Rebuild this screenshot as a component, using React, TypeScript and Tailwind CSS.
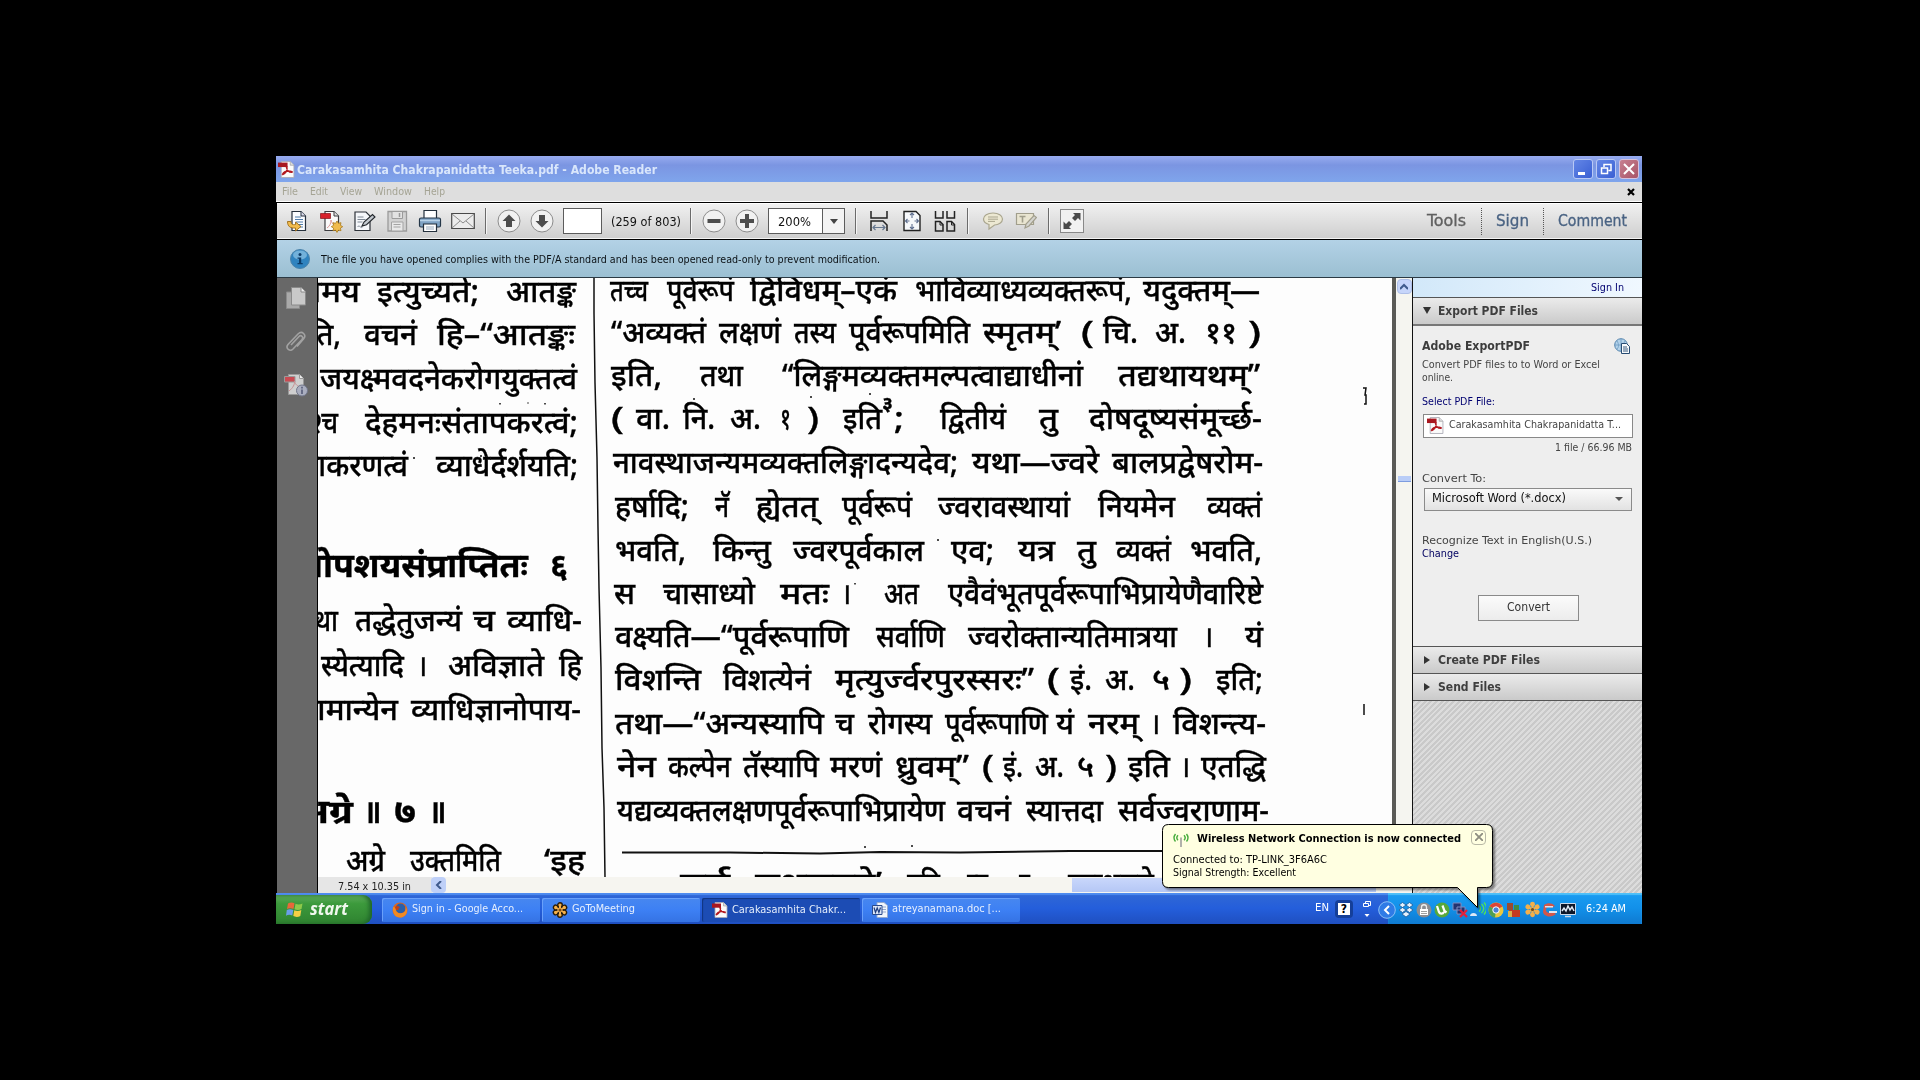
import React, { useLayoutEffect, useRef, useState } from 'react';

interface FitProps {
  w: number;
  className?: string;
  children: string;
}

// Single-line text stretched or squeezed to an exact width
const Fit: React.FC<FitProps> = ({ w, className = '', children }) => {
  const ref = useRef<HTMLSpanElement>(null);
  const [scale, setScale] = useState(1);

  useLayoutEffect(() => {
    if (ref.current && ref.current.offsetWidth > 0) {
      setScale(w / ref.current.getBoundingClientRect().width);
    }
  }, []);

  return (
    <span className="block shrink-0" style={{ width: w }}>
      <span
        ref={ref}
        className={`inline-block origin-left whitespace-pre ${className}`}
        style={{ transform: `scaleX(${scale})` }}
      >
        {children}
      </span>
    </span>
  );
};

// [text, start, end] relative to the column's left edge, raised for note marks
type Word = [string, number, number, boolean?];

interface ScanLine {
  base: number;
  bold?: boolean;
  words: Word[];
}

const leftColumn: ScanLine[] = [
  { base: 303, words: [['शामय', -28, 42], ['इत्युच्यते;', 59, 161], ['आतङ्क', 188, 258]] },
  { base: 346, words: [['ति,', -9, 23], ['वचनं', 46, 99], ['हि–“आतङ्कः', 119, 257]] },
  { base: 390, words: [['जयक्ष्मवदनेकरोगयुक्तत्वं', 2, 259]] },
  { base: 434, words: [['श्च', -8, 20], ['देहमनःसंतापकरत्वं;', 47, 260]] },
  { base: 477, words: [['राकरणत्वं', -12, 90], ['व्याधेर्दर्शयति;', 118, 260]] },
  { base: 577, bold: true, words: [['नोपशयसंप्राप्तितः', -16, 210], ['६', 232, 250]] },
  { base: 632, words: [['था', -4, 20], ['तद्धेतुजन्यं', 37, 144], ['च', 155, 177], ['व्याधि-', 189, 264]] },
  { base: 677, words: [['स्येत्यादि', 3, 86], ['।', 99, 109], ['अविज्ञाते', 130, 226], ['हि', 241, 264]] },
  { base: 721, words: [['सामान्येन', -22, 80], ['व्याधिज्ञानोपाय-', 93, 263]] },
  { base: 823, bold: true, words: [['अग्रे', -22, 35], ['॥', 46, 63], ['७', 76, 98], ['॥', 111, 128]] },
  { base: 872, words: [['अग्रे', 28, 67], ['उक्तमिति', 92, 183], ['‘इह', 226, 267]] },
];

const rightColumn: ScanLine[] = [
  { base: 302, words: [['तच्च', 20, 58], ['पूर्वरूपं', 77, 144], ['द्विविधम्–एकं', 160, 307], ['भाविव्याध्यव्यक्तरूपं,', 325, 542], ['यदुक्तम्—', 553, 670]] },
  { base: 344, words: [['“अव्यक्तं', 21, 116], ['लक्षणं', 129, 191], ['तस्य', 204, 246], ['पूर्वरूपमिति', 259, 380], ['स्मृतम्’', 393, 471], ['(', 491, 504], ['चि.', 513, 548], ['अ.', 565, 596], ['११', 615, 647], [')', 658, 671]] },
  { base: 387, words: [['इति,', 21, 72], ['तथा', 110, 153], ['“लिङ्गमव्यक्तमल्पत्वाद्याधीनां', 192, 493], ['तद्यथायथम्”', 528, 670]] },
  { base: 430, words: [['(', 21, 34], ['वा.', 46, 80], ['नि.', 93, 125], ['अ.', 140, 171], ['१', 190, 201], [')', 217, 229], ['इति', 253, 292], ['३', 292, 303, true], [';', 304, 314], ['द्वितीयं', 350, 416], ['तु', 449, 468], ['दोषदूष्यसंमूर्च्छ-', 499, 672]] },
  { base: 474, words: [['नावस्थाजन्यमव्यक्तलिङ्गादन्यदेव;', 23, 368], ['यथा—ज्वरे', 382, 509], ['बालप्रद्वेषरोम-', 522, 673]] },
  { base: 518, words: [['हर्षादि;', 25, 99], ['नॅ', 125, 139], ['ह्येतत्', 166, 228], ['पूर्वरूपं', 252, 322], ['ज्वरावस्थायां', 348, 480], ['नियमेन', 508, 585], ['व्यक्तं', 617, 672]] },
  { base: 562, words: [['भवति,', 25, 96], ['किन्तु', 123, 181], ['ज्वरपूर्वकाल', 203, 334], ['एव;', 361, 404], ['यत्र', 428, 465], ['तु', 487, 506], ['व्यक्तं', 526, 581], ['भवति,', 600, 672]] },
  { base: 605, words: [['स', 24, 45], ['चासाध्यो', 73, 165], ['मतः', 190, 239], ['।', 251, 261], ['अत', 294, 329], ['एवैवंभूतपूर्वरूपाभिप्रायेणैवारिष्टे', 358, 673]] },
  { base: 648, words: [['वक्ष्यति—“पूर्वरूपाणि', 25, 259], ['सर्वाणि', 286, 355], ['ज्वरोक्तान्यतिमात्रया', 378, 587], ['।', 613, 623], ['यं', 655, 673]] },
  { base: 691, words: [['विशन्ति', 25, 111], ['विशत्येनं', 133, 221], ['मृत्युर्ज्वरपुरस्सरः”', 245, 444], ['(', 457, 470], ['इं.', 480, 502], ['अ.', 515, 545], ['५', 562, 580], [')', 589, 602], ['इति;', 626, 673]] },
  { base: 735, words: [['तथा—“अन्यस्यापि', 25, 234], ['च', 245, 264], ['रोगस्य', 278, 342], ['पूर्वरूपाणि', 355, 458], ['यं', 466, 484], ['नरम्', 498, 549], ['।', 560, 570], ['विशन्त्य-', 583, 676]] },
  { base: 778, words: [['नेन', 27, 66], ['कल्पेन', 78, 141], ['तॅस्यापि', 153, 229], ['मरणं', 240, 292], ['ध्रुवम्”', 305, 379], ['(', 392, 404], ['इं.', 413, 433], ['अ.', 445, 474], ['५', 487, 504], [')', 515, 527], ['इति', 538, 580], ['।', 590, 600], ['एतद्धि', 611, 676]] },
  { base: 822, words: [['यद्यव्यक्तलक्षणपूर्वरूपाभिप्रायेण', 27, 355], ['वचनं', 367, 421], ['स्यात्तदा', 436, 513], ['सर्वज्वराणाम-', 528, 679]] },
  { base: 895, words: [['पूर्व', 90, 140], ['लक्षणमते’', 165, 292], ['नहि', 317, 350], ['स्य', 377, 398], ['तु', 429, 440], ['व्याधयते', 478, 564]] },
];

const ScanColumn: React.FC<{ lines: ScanLine[] }> = ({ lines }) => (
  <div className="[-webkit-text-stroke:0.35px_#000]">
    {lines.map((line, i) => (
      <div
        key={i}
        className={`flex items-end leading-[40px] ${line.bold ? 'text-[33px] font-bold' : 'text-[30px] font-medium'}`}
        style={{ height: line.base - (i === 0 ? 270 : lines[i - 1].base) }}
      >
        {line.words.map(([text, start, end, raised], j) => (
          <div
            key={j}
            className={raised ? 'mb-[15px] shrink-0 text-[19px] font-bold' : 'shrink-0'}
            style={{ marginLeft: start - (j === 0 ? 0 : line.words[j - 1][2]) }}
          >
            <Fit w={end - start}>{text}</Fit>
          </div>
        ))}
      </div>
    ))}
  </div>
);

const PdfIcon: React.FC<{ className?: string }> = ({ className = 'size-4' }) => (
  <svg viewBox="0 0 16 16" className={className}>
    <path d="M3 .5h8.5L15 4v11.5H3z" fill="#fbfbfb" stroke="#a9a9b4" strokeWidth=".8" />
    <path d="M11.5.5V4H15" fill="#ddd" stroke="#999" strokeWidth=".6" />
    <path d="M0 1.5h9v4.2H0z" fill="#a81820" />
    <path d="M4 13c4-2 5-5 4.3-8M7.8 5c.6 4 3 6 6 5.6M4 13c1.8-3.5 5-4.4 9.8-2.6" fill="none" stroke="#b31920" strokeWidth="1.4" />
  </svg>
);

const Separator = () => <div className="h-[26px] w-px shrink-0 bg-[#6b6b6b] shadow-[1px_0_0_#f5f5f5]" />;

const Cell: React.FC<{ children: React.ReactNode }> = ({ children }) => (
  <div className="flex w-[33px] shrink-0 items-center justify-center">{children}</div>
);

const page = 'M6 2.5h9l4.5 4.5v14.5H6z';

const OpenIcon = () => (
  <svg viewBox="0 0 24 24" className="size-6">
    <path d={page} fill="#fafcff" stroke="#26303c" strokeWidth="1.2" />
    <path d="M15 2.5V7h4.5" fill="#dde" stroke="#26303c" />
    <path d="M9 8h6M9 10.5h8M10 13h7M11 15.5h6M12 18h5" stroke="#4f7ba8" strokeWidth="1.1" />
    <path d="M1.5 12.5c0 5 3 7 8 6.5v3l5.5-4.5-5.5-4.5v2.5c-3 .5-4.5 0-4.5-3z" fill="#f2bc4d" stroke="#9c6a15" strokeWidth=".9" />
  </svg>
);

const CreateIcon = () => (
  <svg viewBox="0 0 24 24" className="size-6">
    <path d={page} fill="#fafafa" stroke="#3c3c40" strokeWidth="1.2" />
    <path d="M15 2.5V7h4.5" fill="#ddd" stroke="#3c3c40" />
    <path d="M1.5 4.5h10v5h-10z" fill="#d7222c" stroke="#861118" strokeWidth=".7" />
    <path d="M8 19c3-2 4-5 4-8 1 4 3 5 5 5" fill="none" stroke="#d99" />
    <path d="m18 12 1.4 2.3 2.6-.6-.6 2.6 2.3 1.4-2.3 1.4.6 2.6-2.6-.6L18 23.4l-1.4-2.3-2.6.6.6-2.6-2.3-1.4 2.3-1.4-.6-2.6 2.6.6z" fill="#f0bb4e" stroke="#a87a1c" strokeWidth=".8" />
  </svg>
);

const EditIcon = () => (
  <svg viewBox="0 0 24 24" className="size-6">
    <path d="M3 3h11l4 4v14.5H3z" fill="#f5f7fa" stroke="#2c3138" strokeWidth="1.2" />
    <path d="M5.5 8h6M5.5 10.500h8M5.500 13h5M5.500 18c2-3 3 2 5 0" fill="none" stroke="#7e8894" />
    <path d="m10 17 2-4 8.500-7.500 2.500 2.500-8.500 7.700z" fill="#c3c9cf" stroke="#23272c" strokeWidth="1.1" />
  </svg>
);

const SaveIcon = () => (
  <svg viewBox="0 0 24 24" className="size-6">
    <path d="M3 2.500h18.500V22H3z" fill="#d2d2d2" stroke="#9b9b9b" strokeWidth="1.3" />
    <path d="M7 2.500h10.500v7H7z" fill="#e2e2e2" stroke="#9b9b9b" />
    <path d="M14.500 4v4" stroke="#999" strokeWidth="1.5" />
    <path d="M6.500 13H18v9H6.500zM8.500 15.500h7M8.500 18h7" fill="#e8e8e8" stroke="#a3a3a3" />
  </svg>
);

const PrintIcon = () => (
  <svg viewBox="0 0 24 24" className="size-6">
    <path d="M6 1.500h12.500V10H6z" fill="#fff" stroke="#24303d" strokeWidth="1.2" />
    <rect x="1.5" y="9" width="21" height="9" rx="1.5" fill="#7fa3c4" stroke="#253748" strokeWidth="1.2" />
    <path d="M2 11.500h20" stroke="#b9d3e8" strokeWidth="1.5" />
    <path d="M5.500 15h13v7.500h-13z" fill="#fff" stroke="#24303d" strokeWidth="1.2" />
    <path d="M8 18h8M8 20h8" stroke="#9ab" />
  </svg>
);

const MailIcon = () => (
  <svg viewBox="0 0 24 24" className="size-6">
    <path d="M.7 4.500h22.600v15H.7z" fill="#ececec" stroke="#4a4a4a" strokeWidth="1.2" />
    <path d="m1 5 11 9L23 5M1 19l8-7M23 19l-8-7" fill="none" stroke="#8b8b8b" />
  </svg>
);

const RoundIcon: React.FC<{ d: string }> = ({ d }) => (
  <svg viewBox="0 0 24 24" className="size-6">
    <circle cx="12" cy="12" r="11" fill="#f1f1f1" stroke="#8c8c8c" />
    <path d={d} fill="#4d4d4d" />
  </svg>
);

const Toolbar = () => (
  <div className="flex h-[38px] items-center border-t border-b border-black bg-linear-to-b from-[#f1f1f1] to-[#cecece] pl-[4px] shadow-[inset_0_1px_0_#fff,inset_0_-1px_0_#f4f4f4]">
    <Cell><OpenIcon /></Cell>
    <Cell><CreateIcon /></Cell>
    <Cell><EditIcon /></Cell>
    <Cell><SaveIcon /></Cell>
    <Cell><PrintIcon /></Cell>
    <Cell><MailIcon /></Cell>
    <div className="mx-[6px]"><Separator /></div>
    <Cell><RoundIcon d="M12 5.500 18.500 12H15v6H9v-6H5.500z" /></Cell>
    <Cell><RoundIcon d="M12 18.500 5.500 12H9V6h6v6h3.500z" /></Cell>
    <div className="ml-[5px] h-[26px] w-[39px] shrink-0 border border-[#5c5c5c] bg-white" />
    <div className="ml-[9px]"><Fit w={70} className="text-[13px] text-[#111]">(259 of 803)</Fit></div>
    <div className="mr-[6px] ml-[9px]"><Separator /></div>
    <Cell><RoundIcon d="M5.500 10h13v4h-13z" /></Cell>
    <Cell><RoundIcon d="M10 5h4v5h5v4h-5v5h-4v-5H5v-4h5z" /></Cell>
    <div className="ml-[5px] flex h-[26px] w-[77px] shrink-0 border border-[#5c5c5c] bg-white">
      <div className="flex w-[54px] items-center border-r border-[#5c5c5c] pl-[9px]">
        <Fit w={33} className="text-[13px] text-[#111]">200%</Fit>
      </div>
      <div className="flex flex-1 items-center justify-center bg-[#f3f3f3]">
        <div className="border-x-4 border-t-5 border-x-transparent border-t-[#444]" />
      </div>
    </div>
    <div className="mr-[6px] ml-[10px]"><Separator /></div>
    <Cell>
      <svg viewBox="0 0 20 22" className="h-[22px] w-5" fill="none" stroke="#222" strokeWidth="1.5">
        <path d="M2 1v7h16V1M2 21V11h12l4 4v6" />
        <path d="M4 17.500h12M6.500 15 4 17.500 6.500 20M13.500 15l2.500 2.500-2.500 2.500" stroke="#667890" strokeWidth="1.2" />
      </svg>
    </Cell>
    <Cell>
      <svg viewBox="0 0 20 22" className="h-[22px] w-5" fill="none" stroke="#222" strokeWidth="1.4">
        <path d="M2 1.500h12l4 4v15H2z" fill="#f6f8fb" />
        <path d="M10 3v5M8 5l2-2 2 2M10 19v-5M8 17l2 2 2-2M3.500 11h4M5.500 9l-2 2 2 2M16.500 11h-4M14.500 9l2 2-2 2" stroke="#607090" strokeWidth="1.1" />
      </svg>
    </Cell>
    <Cell>
      <svg viewBox="0 0 22 22" className="size-[22px]" fill="none" stroke="#222" strokeWidth="1.5">
        <path d="M1.500 1v7h7.500V1M13 1v7h7.500V1M1.500 21V11.500H6l3 3V21zM13 21V11.500h4.500l3 3V21z" />
        <path d="M6 12v3h3M17.500 12v3h3" strokeWidth="1" />
      </svg>
    </Cell>
    <div className="mr-[8px] ml-[6px]"><Separator /></div>
    <Cell>
      <svg viewBox="0 0 22 20" className="h-5 w-[22px]" fill="#ece8d2" stroke="#aaa68f" strokeWidth="1.2">
        <path d="M11 2c5.500 0 9.500 2.500 9.500 6s-4 6-8 6L7 18v-4.500C3.500 12.500 1.500 10.500 1.500 8 1.500 4.500 5.500 2 11 2z" />
        <path d="M6 6h10M6 8.200h10M6 10.400h7" strokeWidth="1" />
      </svg>
    </Cell>
    <Cell>
      <svg viewBox="0 0 22 20" className="h-5 w-[22px]" fill="#e9e5d1" stroke="#a19e8c" strokeWidth="1.2">
        <path d="M1.500 2.500h17v11h-17z" />
        <path d="M4.500 5.500h6M7.500 5.500v6" strokeWidth="1.6" />
        <path d="m10 17 1-4 8-8.500 2.500 2L14 15z" fill="#d5d5d0" />
      </svg>
    </Cell>
    <div className="mr-[11px] ml-[6px]"><Separator /></div>
    <div className="flex size-6 items-center justify-center border border-[#888] bg-[#f1f1f1]">
      <svg viewBox="0 0 20 20" className="size-5" fill="#4a4a4a">
        <path d="M11 2h7.500v7.500L16 7l-3 3-3-3 3-3zM9 18H1.500v-7.500L4 13l3-3 3 3-3 3z" />
      </svg>
    </div>
    <div className="ml-auto flex h-full items-center pr-[15px] text-[16px] text-[#4a6383] [-webkit-text-stroke:0.3px_currentColor]">
      <Fit w={39} className="text-[#5f5f5f]">Tools</Fit>
      <div className="mr-[14px] ml-[15px] h-[27px] border-l border-dotted border-[#555]" />
      <Fit w={33}>Sign</Fit>
      <div className="mx-[14px] h-[27px] border-l border-dotted border-[#555]" />
      <Fit w={69}>Comment</Fit>
    </div>
  </div>
);

const TitleBar = () => (
  <div className="flex h-[26px] items-center bg-linear-to-b from-[#97abef] via-[#7b95e2] via-35% to-[#7fa5ec] pr-[3px] pl-[2px]">
    <PdfIcon className="size-[17px]" />
    <div className="ml-[2px]"><Fit w={360} className="text-[13px] font-bold text-[#d9e6fb]">Carakasamhita Chakrapanidatta Teeka.pdf - Adobe Reader</Fit></div>
    <div className="ml-auto flex gap-[3px]">
      <div className="flex size-5 items-end rounded-[3px] border border-[#b9c9f5] bg-linear-to-br from-[#6486e6] to-[#3a5fd3] pb-[3px] pl-[4px]">
        <div className="h-[3px] w-[7px] bg-white" />
      </div>
      <div className="flex size-5 items-center justify-center rounded-[3px] border border-[#b9c9f5] bg-linear-to-br from-[#6486e6] to-[#3a5fd3]">
        <svg viewBox="0 0 12 12" className="size-3" fill="none" stroke="#fff">
          <path d="M4 4V1.500h7v6H8.500M1.500 5h6v5.500h-6zM4 1.500h7M1.500 5h6" strokeWidth="1.5" />
        </svg>
      </div>
      <div className="flex size-5 items-center justify-center rounded-[3px] border border-[#d5c2dd] bg-linear-to-br from-[#c78090] to-[#a85468]">
        <svg viewBox="0 0 12 12" className="size-3" stroke="#fff" strokeWidth="2">
          <path d="m1 1 10 10M11 1 1 11" />
        </svg>
      </div>
    </div>
  </div>
);

const MenuBar = () => (
  <div className="flex h-5 items-center border-b border-white bg-[#dedede] pt-px pl-[6px] text-[11px] text-[#a5a494]">
    <Fit w={16}>File</Fit>
    <div className="ml-[12px]"><Fit w={18}>Edit</Fit></div>
    <div className="ml-[12px]"><Fit w={22}>View</Fit></div>
    <div className="ml-[12px]"><Fit w={38}>Window</Fit></div>
    <div className="ml-[12px]"><Fit w={21}>Help</Fit></div>
    <svg viewBox="0 0 8 8" className="mr-[7px] ml-auto size-[8px]" stroke="#000" strokeWidth="2.2">
      <path d="m1 1 6 6M7 1 1 7" />
    </svg>
  </div>
);

const NoticeBar = () => (
  <div className="flex h-[38px] items-center border-b border-[#2b3a44] bg-linear-to-b from-[#b3d2e6] to-[#9bbfd2] pl-[13px]">
    <svg viewBox="0 0 20 20" className="size-5">
      <circle cx="10" cy="10" r="9.5" fill="#2f83bf" stroke="#4b83aa" />
      <ellipse cx="10" cy="6" rx="7" ry="4.5" fill="#8ec4e6" opacity=".7" />
      <circle cx="10" cy="5.5" r="1.5" fill="#0d3c68" />
      <path d="M7.500 8.500h3.700v5.500h1.500v1.300H7.500V14H9V9.800H7.500z" fill="#0d3c68" />
    </svg>
    <div className="mb-[2px] ml-[11px]">
      <Fit w={559} className="text-[11px] text-[#0c1216]">
        The file you have opened complies with the PDF/A standard and has been opened read-only to prevent modification.
      </Fit>
    </div>
  </div>
);

const NavStrip = () => (
  <div className="flex w-[41px] shrink-0 flex-col items-center border-r border-black bg-[#686868] pt-[8px] pr-[3px]">
    <svg viewBox="0 0 22 24" className="h-6 w-[22px]" fill="#b9b9b9" stroke="#8a8a8a">
      <path d="M1.500 6h13v16.500h-13z" fill="#a9a9a9" />
      <path d="M6.500 1.500h9.500l4.500 4.500v13h-14z" fill="#c9c9c9" />
      <path d="M16 1.500V6h4.500" fill="#eee" />
    </svg>
    <svg viewBox="0 0 22 24" className="mt-[20px] h-6 w-[22px]" fill="none" stroke="#a2a2a2" strokeWidth="1.6">
      <path d="m6 15 8-8.500c2-2 5 .5 3 3L8 19c-3 3-8-.5-5-4.500L13 4c4-4 9 1 5.500 5L12 16.500" />
    </svg>
    <svg viewBox="0 0 24 24" className="mt-[19px] size-6">
      <path d="M4.500 1.500h11l4 4v16h-15z" fill="#cfcfcf" stroke="#999" />
      <path d="M15.500 1.500v4h4" fill="#eee" stroke="#999" />
      <path d="M.5 3.500H11V9H.5z" fill="#c84a52" stroke="#999" />
      <path d="M5 18c4-3 6-7 5.500-10 1 4 3 5 6 6" fill="none" stroke="#c78f93" />
      <circle cx="18" cy="17.5" r="5.5" fill="#aaaebf" stroke="#72778b" />
      <path d="M18 13.800v1.600M18 16.500v4.500" stroke="#5b617c" strokeWidth="1.7" />
    </svg>
  </div>
);

const DocumentView = () => (
  <div className="flex min-w-0 flex-1 flex-col">
    <div className="flex min-h-0 flex-1">
      <div className="relative flex min-w-0 flex-1 overflow-hidden bg-[#fdfdfd] font-['Noto_Sans','Noto_Sans_Devanagari','Lohit_Devanagari',sans-serif] text-black">
        <div className="w-[272px] shrink-0 overflow-hidden"><ScanColumn lines={leftColumn} /></div>
        <div className="min-w-0 flex-1"><ScanColumn lines={rightColumn} /></div>
        {/* column rule, footnote rule and specks of the scan */}
        <svg viewBox="0 0 1073 599" className="absolute top-0 left-0 h-[599px] w-[1073px]" fill="none" stroke="#111">
          <path d="M276 0v35l1 70 2 75 1 70 1 60 2 80 1 80 2 60 1 69" strokeWidth="1.5" />
          <path d="M304 574.500h108l90 1 60-1.500 80 .5 110-1.500h93" strokeWidth="2" />
          <path d="M1045 110h3l-1 7h1v9h-2M1046 426v11" strokeWidth="1.5" />
          <path d="M182 125v1.500M210 124.500v1M227 125v1.500M96 179v2M163 177v2M518 170v2M376 120v2M493 118v2M552 115v2M795 222v2M512 268v2M620 261v2M537 305v1.500M547 568v2M594 567v2" strokeWidth="1.5" />
        </svg>
      </div>
      <div className="w-1 shrink-0 bg-[#5a5a56]" />
    </div>
    <div className="flex h-4 shrink-0 bg-[#f6f5f0]">
      <div className="flex w-[114px] items-center bg-[#e6e6e6] pl-[20px]">
        <Fit w={73} className="text-[11px] leading-[14px] text-[#222]">7.54 x 10.35 in</Fit>
      </div>
      <div className="-ml-px flex w-[15px] items-center justify-center rounded-sm bg-[#bfd0f8]">
        <svg viewBox="0 0 8 8" className="size-2" fill="none" stroke="#3f5a8c" strokeWidth="2">
          <path d="M6 0 2 4l4 4" />
        </svg>
      </div>
      <div className="mt-px ml-[626px] h-[14px] w-[304px] bg-linear-to-b from-[#c9d7fb] to-[#b5c7f5]" />
    </div>
  </div>
);

const VerticalScroll = () => (
  <div className="flex w-[17px] shrink-0 flex-col items-center border-r border-[#111] bg-[#f5f5f0]">
    <div className="mt-px flex size-[15px] items-center justify-center rounded-sm border border-[#aebfe8] bg-[#c6d5fa]">
      <svg viewBox="0 0 8 8" className="size-2" fill="none" stroke="#3f5a8c" strokeWidth="2">
        <path d="m0 6 4-4 4 4" />
      </svg>
    </div>
    <div className="mt-[182px] h-[6px] w-[13px] border-b border-[#7d9cdf] bg-[#b9cdf7]" />
  </div>
);

const PanelHeader: React.FC<{ label: string; width: number; open?: boolean }> = ({ label, width, open }) => (
  <div className="flex h-[27px] shrink-0 items-center border-t border-[#555] bg-linear-to-b from-[#ebebeb] to-[#cacaca] pb-px pl-[10px]">
    {open ? (
      <div className="mr-[7px] border-x-4 border-t-7 border-x-transparent border-t-[#333]" />
    ) : (
      <div className="mr-[8px] ml-px border-y-4 border-l-6 border-y-transparent border-l-[#333]" />
    )}
    <Fit w={width} className="text-[13px] font-bold text-[#3f3f3f]">{label}</Fit>
  </div>
);

const SidePanel = () => (
  <div className="flex w-[229px] shrink-0 flex-col bg-[#eee] text-[11px] text-[#444]">
    <div className="flex h-[19px] shrink-0 items-center justify-end bg-linear-to-r from-[#d2e8f9] to-[#f0f8ff] pt-[2px] pr-[18px]">
      <Fit w={33} className="text-[#000070]">Sign In</Fit>
    </div>
    <PanelHeader label="Export PDF Files" width={100} open />
    <div className="flex h-[322px] shrink-0 flex-col border-t-2 border-[#777] px-[9px]">
      <div className="mt-[11px] flex items-start justify-between">
        <Fit w={108} className="text-[13px] leading-[18px] font-bold text-[#3c3c3c]">Adobe ExportPDF</Fit>
        <svg viewBox="0 0 16 16" className="mt-px mr-[3px] size-4">
          <circle cx="7" cy="7" r="6.3" fill="#b3d2ea" stroke="#5282ac" />
          <path d="M1 7h12M7 1v12M3 3c2 3 2 6 0 8M11 3c-2 3-2 6 0 8" stroke="#6c9ac2" strokeWidth=".8" fill="none" />
          <path d="M7.500 5.500h5l3 3v7h-8z" fill="#f6f9fc" stroke="#274b72" />
          <path d="M9 9h4M9 11h5M9 13h5" stroke="#274b72" strokeWidth=".9" />
        </svg>
      </div>
      <div className="mt-[2px] leading-[13px]">
        <Fit w={178}>Convert PDF files to to Word or Excel</Fit>
        <Fit w={31}>online.</Fit>
      </div>
      <div className="mt-[11px] leading-[14px] text-[#000070]"><Fit w={73}>Select PDF File:</Fit></div>
      <div className="mt-[5px] ml-px flex h-[24px] w-[210px] items-center border border-[#888] bg-white pl-[3px]">
        <PdfIcon className="size-[17px]" />
        <div className="mb-px ml-[5px]"><Fit w={172}>Carakasamhita Chakrapanidatta T...</Fit></div>
      </div>
      <div className="mt-[3px] flex justify-end pr-[1px] leading-[14px]"><Fit w={77}>1 file / 66.96 MB</Fit></div>
      <div className="mt-[17px] leading-[14px]"><Fit w={64}>Convert To:</Fit></div>
      <div className="mt-[2px] ml-[2px] flex h-[23px] w-[208px] items-center justify-between border border-[#8a8a8a] bg-linear-to-b from-[#fafafa] to-[#e2e2e2] pr-[8px] pb-px pl-[7px]">
        <Fit w={134} className="text-[12px] text-[#111]">Microsoft Word (*.docx)</Fit>
        <div className="border-x-4 border-t-4 border-x-transparent border-t-[#555]" />
      </div>
      <div className="mt-[23px] leading-[13px]">
        <Fit w={170}>Recognize Text in English(U.S.)</Fit>
        <Fit w={37} className="-mt-px text-[#000060]">Change</Fit>
      </div>
      <div className="mt-[35px] ml-[56px] flex h-[26px] w-[101px] items-center justify-center border border-[#8a8a8a] bg-linear-to-b from-[#fbfbfb] to-[#ececec] pb-px">
        <Fit w={43} className="text-[12px] text-[#333]">Convert</Fit>
      </div>
    </div>
    <PanelHeader label="Create PDF Files" width={102} />
    <PanelHeader label="Send Files" width={63} />
    <div className="flex-1 border-t border-[#555] bg-[repeating-linear-gradient(135deg,#c9c9c9_0px,#c9c9c9_2px,#dcdcdc_2px,#dcdcdc_4px)]" />
  </div>
);

const FirefoxIcon = () => (
  <svg viewBox="0 0 16 16" className="size-4">
    <circle cx="8" cy="8" r="7.5" fill="#e0661b" />
    <circle cx="8.5" cy="6.5" r="5" fill="#2b5fa9" />
    <path d="M1 5c2 0 3 1 3 3s3 4 6 3c3-.8 4-3 3.500-6C17 9 14 15.500 8 15.500S.5 10 1 5z" fill="#f08a24" />
    <path d="M3 5c2-2 4-1 5 .5-1 0-2 1-1.500 2.500L4 8z" fill="#c63e13" />
  </svg>
);

const petals = [0, 60, 120, 180, 240, 300];

const FlowerIcon: React.FC<{ outline?: string; className?: string }> = ({ outline = 'none', className = 'size-4' }) => (
  <svg viewBox="0 0 16 16" className={className}>
    {petals.map((a) => (
      <circle key={a} cx="8" cy="3" r="2.3" fill="#f5b04a" stroke={outline} strokeWidth="1.4" transform={`rotate(${a} 8 8)`} />
    ))}
    {petals.map((a) => (
      <path key={a} d="M8 3v4" stroke="#f5b04a" strokeWidth="2" transform={`rotate(${a} 8 8)`} />
    ))}
    <circle cx="8" cy="8" r="1.5" fill="#7c4a12" />
  </svg>
);

const WordIcon = () => (
  <svg viewBox="0 0 16 16" className="size-4">
    <path d="M5 .5h7l3.500 3v12H5z" fill="#f2f6fc" stroke="#93a9cf" />
    <path d="M10 5h4M10 7.500h4M10 10h4" stroke="#93a9cf" />
    <path d="M.5 3.500h9.500v9H.5z" fill="#dce6f7" stroke="#2b4b8d" />
    <path d="m2 5.500 1.500 5L5.200 6l1.700 4.500L8.500 5.500" fill="none" stroke="#1e3d80" strokeWidth="1.2" />
  </svg>
);

const Task: React.FC<{ icon: React.ReactNode; label: string; width: number; active?: boolean }> = ({ icon, label, width, active }) => (
  <div
    className={`flex h-[24px] w-[158px] shrink-0 items-center gap-[4px] rounded-[2px] pl-[10px] text-[11px] text-[#e6effd] ${
      active ? 'bg-[#1c4cb4] pt-px shadow-[inset_1px_1px_1px_#12357f]' : 'bg-linear-to-b from-[#4787f0] via-[#3d80f4] to-[#3573e4] shadow-[inset_1px_1px_0_#69a0fa]'
    }`}
  >
    {icon}
    <Fit w={width}>{label}</Fit>
  </div>
);

const TrayCell: React.FC<{ children: React.ReactNode }> = ({ children }) => (
  <div className="flex w-[18px] shrink-0 justify-center">
    <svg viewBox="0 0 16 16" className="size-4">{children}</svg>
  </div>
);

const Taskbar = () => (
  <div className="flex h-[31px] shrink-0 items-center bg-linear-to-b from-[#3168d5] via-[#245edb] to-[#1f4fc0] pt-[2px] shadow-[inset_0_2px_1px_#4f8cf0]">
    <div className="flex h-[29px] w-[96px] shrink-0 items-center rounded-r-[9px] bg-linear-to-b from-[#5eac5c] via-[#3c9a3c] via-30% to-[#2f8330] pl-[10px] shadow-[inset_-3px_0_4px_#20662a]">
      <svg viewBox="0 0 18 17" className="h-[17px] w-[18px]">
        <path d="M2 2.500c2-1.200 4.500-1.200 6.500-.2L7.500 8C5.500 7 3 7 1 8z" fill="#e8683a" />
        <path d="M9.500 2.700c2 1 4.500 1 7-.2L15.500 8c-2 1.200-5 1.200-7 .2z" fill="#8ec94a" />
        <path d="M.8 9c2-1 4.500-1 6.500 0l-1 5.500c-2-1-4.500-1-6.300.2z" fill="#6b9ee8" />
        <path d="M8.300 9.200c2 1 4.700 1 7-.2l-1 6c-2 1.200-5 1.200-7 .1z" fill="#f5cf45" />
      </svg>
      <div className="mb-[2px] ml-[6px]"><Fit w={38} className="font-['Open_Sans',sans-serif] text-[17px] leading-[26px] font-bold text-[#f1f8ee] italic">start</Fit></div>
    </div>
    <div className="ml-[10px] flex gap-[2px]">
      <Task icon={<FirefoxIcon />} label="Sign in - Google Acco..." width={111} />
      <Task icon={<FlowerIcon outline="#2a1c08" />} label="GoToMeeting" width={63} />
      <Task icon={<PdfIcon />} label="Carakasamhita Chakr..." width={114} active />
      <Task icon={<WordIcon />} label="atreyanamana.doc [..." width={109} />
    </div>
    <div className="-mt-[2px] ml-auto flex h-[31px] items-center text-[11px] text-white">
      <Fit w={14}>EN</Fit>
      <div className="ml-[6px] flex size-[18px] items-center justify-center rounded-sm bg-[#153f99]">
        <div className="flex size-[12px] items-center justify-center bg-white text-[12px] leading-none font-bold text-black">?</div>
      </div>
      <svg viewBox="0 0 8 18" className="mr-[17px] ml-[10px] h-[18px] w-2" fill="none" stroke="#fff">
        <path d="M2.500 3.500v-2h5v4H5.500M.5 3.500h5v3h-5z" />
        <path d="M1.500 14h5L4 17z" fill="#fff" stroke="none" />
      </svg>
      <div className="flex h-full items-center bg-linear-to-b from-[#1a9df2] via-[#1290e9] to-[#0f7ad0] pt-[2px] shadow-[inset_0_2px_1px_#4fc0f8]">
        <svg viewBox="0 0 18 18" className="-ml-[10px] size-[18px]">
          <circle cx="9" cy="9" r="8.3" fill="#2f7be6" stroke="#8cc0f6" />
          <path d="M11 5 7 9l4 4" fill="none" stroke="#fff" strokeWidth="2" />
        </svg>
        <div className="w-px" />
        <TrayCell>
          <path d="m4.500.5 3.500 2.500-3.500 2.500L1 3zM11.500.5 15 3l-3.500 2.500L8 3zM4.500 5.500 8 8l-3.500 2.500L1 8zM11.500 5.500 15 8l-3.500 2.500L8 8zM8 9.500l4 2.500-4 3-4-3z" fill="#e4f1fd" stroke="#1d5b98" strokeWidth=".8" />
        </TrayCell>
        <TrayCell>
          <circle cx="8" cy="8" r="7.5" fill="#8b8d92" />
          <path d="M4 7h8v6H4z" fill="#fff" />
          <path d="M5.500 7V5c0-3 5-3 5 0v2" fill="none" stroke="#eee" strokeWidth="1.3" />
          <path d="M5 9.500h6M5 11.500h6" stroke="#888" strokeWidth=".8" />
        </TrayCell>
        <TrayCell>
          <circle cx="8" cy="8" r="7.5" fill="#58a83b" />
          <path d="m3 4 2 6c1 2.500 4 2 5 0M8.500 3.500l2 5.500 2 1.500" fill="none" stroke="#fff" strokeWidth="2.2" />
        </TrayCell>
        <TrayCell>
          <path d="M1 1h8v7H1zM5 5h8v7H5z" fill="#23336f" stroke="#7f8bc0" />
          <path d="m8 8 7 7M15 8l-7 7" stroke="#e3203a" strokeWidth="2.2" />
        </TrayCell>
        <TrayCell>
          <path d="M0 14c0-4 7-4 7 0z" fill="#dbe9f7" />
          <path d="M9 3.500c2 2 2 4 0 6M11.500 2c3 3 3 6 0 9M14 .5c3.500 4 3.500 8 0 12" fill="none" stroke="#4fe05f" strokeWidth="1.4" />
        </TrayCell>
        <TrayCell>
          <circle cx="8" cy="8" r="7.5" fill="#e9c83e" />
          <path d="M8 8 1.500 4.300A7.500 7.500 0 0 1 14.500 4.500z" fill="#db4437" />
          <path d="M8 8 1.500 4.300A7.500 7.500 0 0 0 7 15.500z" fill="#4f9e53" />
          <circle cx="8" cy="8" r="3.2" fill="#4a80d8" stroke="#fff" />
        </TrayCell>
        <TrayCell>
          <path d="M1 1h6v7H1z" fill="#9a4a31" />
          <path d="M3 8h11v7H3z" fill="#c43b22" />
          <path d="M8 3h5v5H8z" fill="#3f8a44" />
          <path d="M2 9h4v6H2z" fill="#d8b24c" />
        </TrayCell>
        <div className="flex w-[18px] justify-center"><FlowerIcon className="size-[17px]" /></div>
        <TrayCell>
          <path d="M2 3c4-3 9-2 11 1L9 6C7 4 4 5 4 8s4 4 7 2l3 2c-4 4-12 3-13-2z" fill="#d2574a" />
          <path d="M7 9h8v2H7zM3 4h8v1.500H3z" fill="#dfe4ee" />
        </TrayCell>
        <TrayCell>
          <path d="M.5 1.500h15v11H.5z" fill="#0c1628" stroke="#cbd8e8" />
          <path d="m2 9 2-3 2 3 2-5 2 4 2-3 2 4" fill="none" stroke="#dfe9f5" strokeWidth="1.5" />
          <path d="M5 14.500h6" stroke="#cbd8e8" strokeWidth="1.5" />
        </TrayCell>
        <div className="pr-[16px] pl-[9px]"><Fit w={40}>6:24 AM</Fit></div>
      </div>
    </div>
  </div>
);

const Balloon = () => (
  <div className="absolute top-[668px] left-[886px] h-[86px] w-[336px]">
    <svg viewBox="0 0 336 86" className="absolute top-0 left-0 h-[86px] w-[336px] drop-shadow-[2px_2px_1px_rgba(0,0,0,0.45)]">
      <path d="M6.500.5h318q6 0 6 6v51q0 6-6 6h-9v20l-20-20h-289q-6 0-6-6v-51q0-6 6-6z" fill="#ffffe1" stroke="#000" />
    </svg>
    <div className="relative flex flex-col pl-[11px] text-[11px] text-black">
      <div className="flex h-[31px] items-center">
        <svg viewBox="0 0 16 14" className="h-[14px] w-4" fill="none" stroke="#46ac3b" strokeWidth="1.4">
          <path d="M2.500 1c-2 2.500-2 5 0 7.500M13.500 1c2 2.500 2 5 0 7.500M5 2.200c-1.500 1.600-1.500 3.500 0 5M11 2.200c1.500 1.600 1.500 3.500 0 5" />
          <path d="M8 4.500V14" stroke="#999" strokeWidth="1.5" />
        </svg>
        <div className="ml-[8px]"><Fit w={264} className="font-bold">Wireless Network Connection is now connected</Fit></div>
        <div className="-mt-[5px] ml-[10px] flex size-[15px] items-center justify-center rounded-sm border border-[#b9b9a6]">
          <svg viewBox="0 0 8 8" className="size-2" stroke="#8d8d80" strokeWidth="1.8">
            <path d="m0 0 8 8M8 0 0 8" />
          </svg>
        </div>
      </div>
      <div className="-mt-[2px] leading-[13px]">
        <Fit w={154}>Connected to: TP-LINK_3F6A6C</Fit>
        <Fit w={123}>Signal Strength: Excellent</Fit>
      </div>
    </div>
  </div>
);

export default function App() {
  return (
    <div className="h-[1080px] w-[1920px] overflow-hidden bg-black pt-[156px] pl-[276px] font-['DejaVu_Sans_Condensed','DejaVu_Sans',sans-serif]">
      <div className="relative flex h-[768px] w-[1366px] flex-col">
        <TitleBar />
        <MenuBar />
        <div className="flex min-h-0 flex-1 flex-col pl-px">
          <Toolbar />
          <NoticeBar />
          <div className="flex min-h-0 flex-1">
            <NavStrip />
            <DocumentView />
            <VerticalScroll />
            <SidePanel />
          </div>
        </div>
        <Taskbar />
        <Balloon />
      </div>
    </div>
  );
}
